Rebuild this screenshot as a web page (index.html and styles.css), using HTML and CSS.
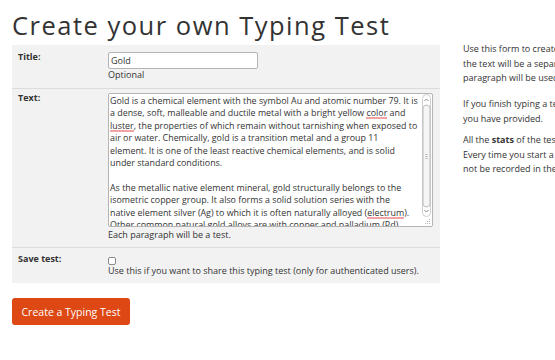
FILE: index.html
```html
<!DOCTYPE html>
<html>
<head>
<meta charset="utf-8">
<link rel="stylesheet" href="styles.css">
</head>
<body>
<div class="page">
  <h1 class="title">Create your own Typing Test</h1>
  <div class="main">
    <form class="form">
      <div class="rows">
        <div class="row row-title">
          <label class="label">Title:</label>
          <div class="field">
            <input class="input" type="text" value="Gold">
            <div class="help">Optional</div>
          </div>
        </div>
        <div class="row row-text">
          <label class="label">Text:</label>
          <div class="field">
            <div class="textarea">
              <div class="ta-text" contenteditable="true" role="textbox" aria-multiline="true">Gold is a chemical element with the symbol Au and atomic number 79. It is
a dense, soft, malleable and ductile metal with a bright yellow <span class="typo">color</span> and
<span class="typo">luster</span>, the properties of which remain without tarnishing when exposed to
air or water. Chemically, gold is a transition metal and a group 11
element. It is one of the least reactive chemical elements, and is solid
under standard conditions.

As the metallic native element mineral, gold structurally belongs to the
isometric copper group. It also forms a solid solution series with the
native element silver (Ag) to which it is often naturally alloyed (<span class="typo">electrum</span>).
Other common natural gold alloys are with copper and palladium (Pd).</div>
              <svg class="scroll" width="9" height="132" viewBox="0 0 9 132" aria-hidden="true">
                <rect x="0.5" y="0.5" width="8" height="122" rx="4" fill="#ffffff" stroke="#cfcfcf"/>
                <polyline points="2.5,7 4.5,5 6.5,7" fill="none" stroke="#8a8a8a" stroke-width="1"/>
                <rect x="1" y="11" width="7" height="102" rx="3.5" fill="#f5f5f5" stroke="#bdbdbd"/>
                <line x1="3.5" y1="60.5" x2="5.5" y2="60.5" stroke="#b0b0b0"/>
                <line x1="3.5" y1="62.5" x2="5.5" y2="62.5" stroke="#b0b0b0"/>
                <line x1="3.5" y1="64.5" x2="5.5" y2="64.5" stroke="#b0b0b0"/>
                <polyline points="2.5,116 4.5,118 6.5,116" fill="none" stroke="#8a8a8a" stroke-width="1"/>
                <rect x="7" y="125" width="1" height="1" fill="#b5b5b5"/>
                <rect x="5" y="127" width="1" height="1" fill="#b5b5b5"/>
                <rect x="7" y="127" width="1" height="1" fill="#b5b5b5"/>
                <rect x="3" y="129" width="1" height="1" fill="#b5b5b5"/>
                <rect x="5" y="129" width="1" height="1" fill="#b5b5b5"/>
                <rect x="7" y="129" width="1" height="1" fill="#b5b5b5"/>
              </svg>
            </div>
            <div class="help">Each paragraph will be a test.</div>
          </div>
        </div>
        <div class="row row-save">
          <label class="label">Save test:</label>
          <div class="field">
            <input class="check" type="checkbox">
            <div class="help">Use this if you want to share this typing test (only for authenticated users).</div>
          </div>
        </div>
      </div>
      <button class="button" type="button">Create a Typing Test</button>
    </form>
    <div class="side">
      <p class="p1">Use this form to create your own typing test. Each paragraph of<br>the text will be a separate test, and a random<br>paragraph will be used each time you start.</p>
      <p class="p2">If you finish typing a test, you will be given another one<br>you have provided.</p>
      <p class="p3">All the <b>stats</b> of the tests will be recorded in your history.<br>Every time you start a test from this page, results will<br>not be recorded in the global rankings.</p>
    </div>
  </div>
</div>
</body>
</html>
```
FILE: styles.css
```css
html, body {
  margin: 0;
  padding: 0;
  background: #ffffff;
}
body {
  font-family: "Open Sans", "Noto Sans", sans-serif;
  color: #333333;
  font-size: 9px;
  overflow: hidden;
  width: 555px;
  height: 360px;
}
.page {
  padding: 0 0 0 12px;
}
.title {
  margin: 0;
  padding-top: 10px;
  height: 45px;
  box-sizing: border-box;
  font-size: 25.5px;
  font-weight: normal;
  letter-spacing: 1.5px;
  line-height: 30px;
  color: #333333;
  white-space: nowrap;
}
.main {
  display: flex;
  gap: 23px;
}
.form {
  width: 428px;
  flex: none;
}
.rows {
  background: #f2f2f2;
}
.row {
  display: grid;
  grid-template-columns: 96px 1fr;
  border-bottom: 1px solid #dcdcdc;
  box-sizing: border-box;
}
.row:last-child {
  border-bottom: none;
}
.row-title {
  padding: 5px 0 7px;
}
.row-text {
  padding: 2px 0 6px;
}
.row-save {
  padding: 4px 0 6px;
}
.label {
  padding-left: 6px;
  font-weight: bold;
  line-height: 14px;
}
.field {
  padding-right: 7px;
}
.input {
  display: block;
  width: 150px;
  height: 17px;
  box-sizing: border-box;
  margin: 2px 0 0;
  padding: 0 2px;
  border: 1px solid #b4b4b4;
  border-radius: 2px;
  font-family: inherit;
  font-size: 9px;
  color: #333;
  background: #fff;
}
.help {
  line-height: 12px;
}
.row-text .help {
  margin-top: 2px;
}
.textarea {
  display: flex;
  width: 325px;
  height: 134px;
  box-sizing: border-box;
  margin: 2px 0 0;
  border: 1px solid #b4b4b4;
  border-radius: 2px;
  background: #fff;
}
.ta-text {
  flex: 1;
  min-width: 0;
  padding: 1px 0 0 1px;
  font-size: 8.9px;
  line-height: 12.4px;
  color: #333;
  white-space: pre;
  overflow: hidden;
  outline: none;
}
.scroll {
  flex: none;
  display: block;
  margin-right: 1px;
}
.typo {
  background-image: radial-gradient(circle, #e23a3a 0.6px, transparent 0.8px);
  background-size: 2px 2px;
  background-repeat: repeat-x;
  background-position: 0 100%;
}
.check {
  display: block;
  appearance: none;
  -webkit-appearance: none;
  margin: 5px 0 0 0;
  width: 8px;
  height: 8px;
  border: 1px solid #8a8a8a;
  border-radius: 2px;
  background: #fff;
  box-sizing: border-box;
}
.button {
  margin-top: 15px;
  display: block;
  width: 118px;
  height: 27px;
  border: none;
  border-radius: 3px;
  background: #dd4814;
  color: #ffffff;
  font-family: inherit;
  font-size: 10.5px;
  padding: 0;
}
.side {
  flex: none;
  margin-top: -3px;
  line-height: 14.5px;
  font-size: 9px;
  white-space: nowrap;
}
.side p {
  margin: 0;
}
.side .p1 {
  margin-bottom: 11.5px;
}
.side .p2 {
  margin-bottom: 7px;
}
```
